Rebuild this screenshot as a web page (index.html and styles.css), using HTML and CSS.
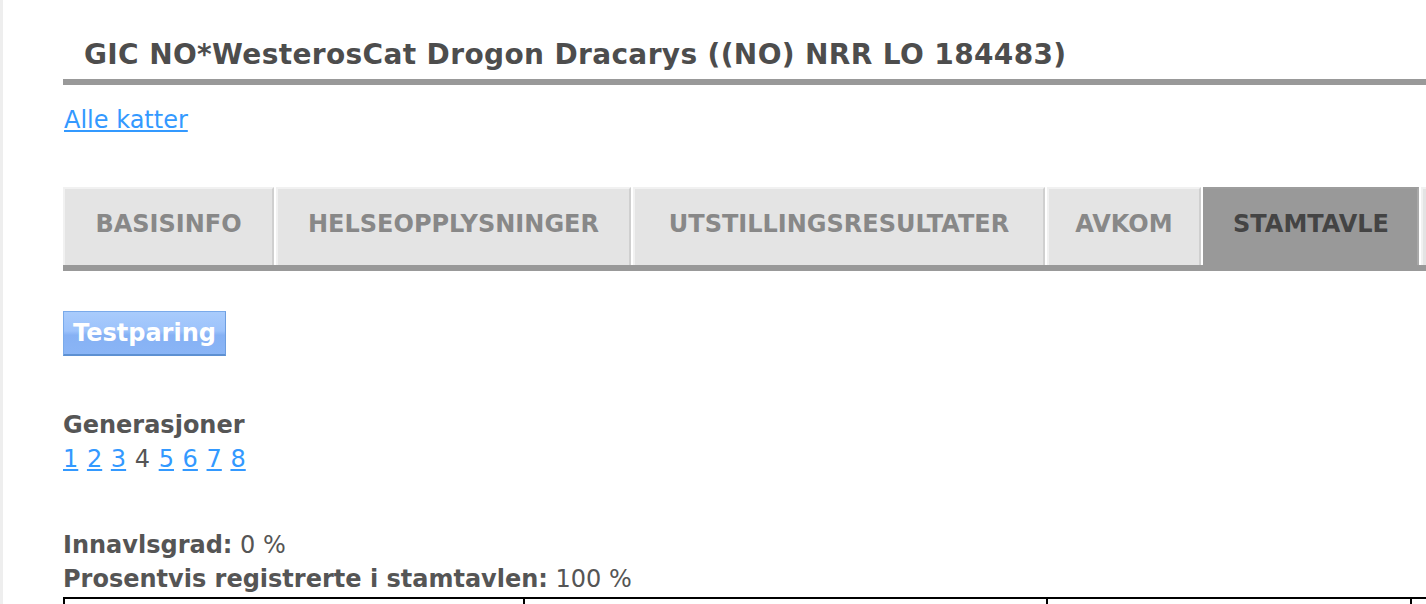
FILE: index.html
```html
<!DOCTYPE html>
<html lang="no">
<head>
<meta charset="utf-8">
<title>GIC NO*WesterosCat Drogon Dracarys</title>
<link rel="stylesheet" href="styles.css">
</head>
<body>
<div class="page">
  <div class="content">
    <h1 class="title">GIC NO*WesterosCat Drogon Dracarys ((NO) NRR LO 184483)</h1>
    <p class="back"><a href="#">Alle katter</a></p>

    <ul class="tabs">
      <li class="tab t-basis">BASISINFO</li>
      <li class="tab t-helse">HELSEOPPLYSNINGER</li>
      <li class="tab t-utst">UTSTILLINGSRESULTATER</li>
      <li class="tab t-avkom">AVKOM</li>
      <li class="tab t-stam active">STAMTAVLE</li>
      <li class="tab t-more">&nbsp;</li>
    </ul>

    <div class="actions">
      <button class="btn" type="button">Testparing</button>
    </div>

    <div class="generations">
      <div class="label">Generasjoner</div>
      <div class="gen-links"><a href="#">1</a> <a href="#">2</a> <a href="#">3</a> <span>4</span> <a href="#">5</a> <a href="#">6</a> <a href="#">7</a> <a href="#">8</a></div>
    </div>

    <div class="stats">
      <div><span class="label">Innavlsgrad:</span> 0 %</div>
      <div><span class="label">Prosentvis registrerte i stamtavlen:</span> 100 %</div>
    </div>

    <table class="pedigree">
      <tr>
        <td class="c1" rowspan="4">&nbsp;</td>
        <td class="c2" rowspan="2">&nbsp;</td>
        <td class="c3">&nbsp;</td>
        <td class="c4">&nbsp;</td>
      </tr>
      <tr><td class="c3">&nbsp;</td><td class="c4">&nbsp;</td></tr>
      <tr><td class="c2" rowspan="2">&nbsp;</td><td class="c3">&nbsp;</td><td class="c4">&nbsp;</td></tr>
      <tr><td class="c3">&nbsp;</td><td class="c4">&nbsp;</td></tr>
    </table>
  </div>
</div>
</body>
</html>
```

FILE: styles.css
```css
html, body {
  margin: 0;
  padding: 0;
  overflow: hidden;
  background: #ffffff;
}

body {
  font-family: "DejaVu Sans", Verdana, sans-serif;
  font-size: 24px;
  line-height: 34px;
  color: #555555;
}

.page {
  border-left: 3px solid #eeeeee;
  min-height: 100vh;
  display: flow-root;
}

.content {
  padding: 38px 0 0 60px;
  width: 1600px;
}

a {
  color: #3399ff;
  text-decoration: underline;
}

.title {
  margin: 0;
  padding: 0 0 7px 21px;
  font-size: 28px;
  line-height: 34px;
  font-weight: bold;
  letter-spacing: 0.36px;
  color: #4d4d4d;
  border-bottom: 6px solid #999999;
  white-space: nowrap;
}

.back {
  margin: 18px 0 0 1px;
}

.tabs {
  list-style: none;
  margin: 50px 0 0 0;
  padding: 0;
  display: flex;
  flex-wrap: nowrap;
  gap: 2px;
  border-bottom: 6px solid #999999;
}

.tab {
  box-sizing: border-box;
  flex: none;
  background: #e4e4e4;
  color: #888888;
  font-weight: bold;
  text-align: center;
  padding: 18px 0 24px 0;
  border-top: 2px solid #f1f1f1;
  border-left: 2px solid #f1f1f1;
  border-right: 2px solid #cfcfcf;
  white-space: nowrap;
}

.t-basis { width: 211px; }
.t-helse { width: 355px; }
.t-utst { width: 412px; }
.t-avkom { width: 154px; }
.t-stam { width: 216px; }
.t-more { width: 200px; }

.tab.active {
  background: #999999;
  color: #444444;
  border-top-color: #9d9d9d;
  border-left-color: #999999;
  border-right-color: #a9a9a9;
}

.actions {
  margin-top: 40px;
}

.btn {
  font-family: "DejaVu Sans", Verdana, sans-serif;
  font-size: 24px;
  font-weight: bold;
  line-height: 30px;
  color: #ffffff;
  height: 45px;
  padding: 0 9px;
  background: linear-gradient(to bottom, #a9ccfc 0%, #9cc2fb 45%, #86b1f4 55%, #8ab5f6 100%);
  border: 1px solid #7aaaea;
  border-bottom: 2px solid #5d90d2;
  border-right-color: #6d9ee0;
  border-radius: 0;
  cursor: pointer;
}

.generations {
  margin-top: 52px;
}

.label {
  font-weight: bold;
}

.gen-links {
  word-spacing: 1px;
}

.gen-links span {
  color: #555555;
}

.stats {
  margin-top: 52px;
}

.pedigree {
  margin-top: 1px;
  border-collapse: collapse;
  width: 1600px;
  table-layout: fixed;
}

.pedigree td {
  border: 2px solid #000000;
  height: 120px;
  vertical-align: top;
}

.pedigree .c1 { width: 456px; }
.pedigree .c2 { width: 519px; }
.pedigree .c3 { width: 360px; }
```
